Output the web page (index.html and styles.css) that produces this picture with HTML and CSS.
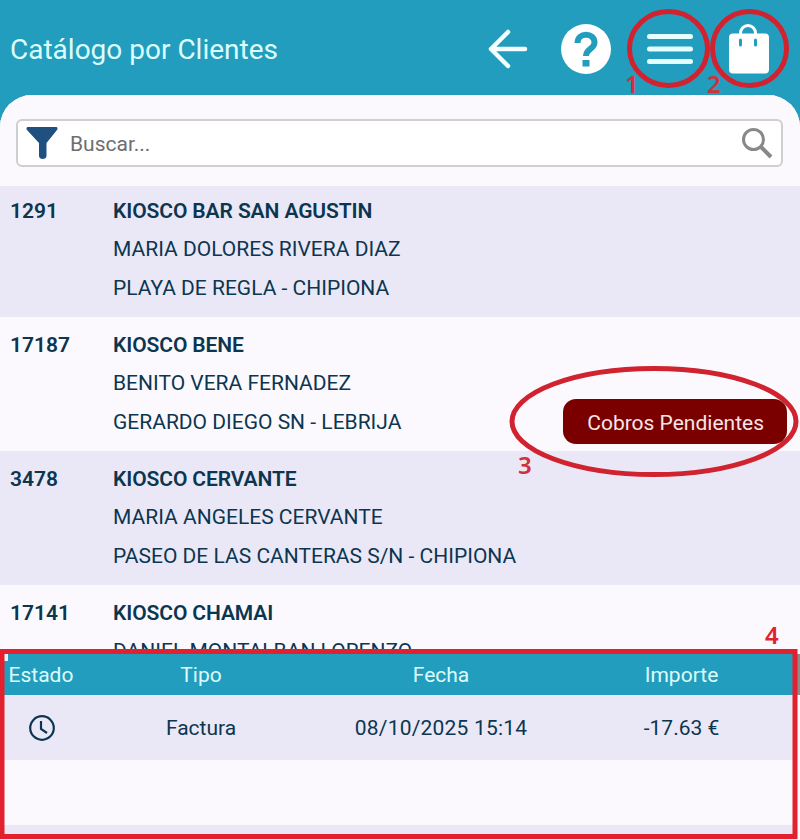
FILE: index.html
```html
<!DOCTYPE html>
<html>
<head>
    <meta charset="utf-8">
    <link rel="stylesheet" href="styles.css">
</head>

<body>

<div class="page">
    <div class="top_bar">
        <div class="title">Catálogo por Clientes</div>
        <div class="top_icons">
            <svg class="icon_back" width="40" height="40" viewBox="0 0 40 40"><path d="M20 3 L3 20 L20 37 M3 20 H37" fill="none" stroke="#f4ffff" stroke-width="4.500" stroke-linecap="round" stroke-linejoin="round"/></svg>
            <svg class="icon_help" width="50" height="50" viewBox="0 0 50 50"><circle cx="25" cy="25" r="25" fill="#fff"/><path d="M16.500 19 C16.500 8 33.500 8 33.500 18.500 C33.500 25 25 25 25 32" fill="none" stroke="#229dbd" stroke-width="6"/><rect x="21.500" y="36" width="7" height="6.500" fill="#229dbd"/></svg>
            <svg class="icon_menu" width="46" height="30" viewBox="0 0 46 30"><path d="M2.500 2.500 H43.500 M2.500 15 H43.500 M2.500 27.500 H43.500" fill="none" stroke="#e4ffff" stroke-width="5" stroke-linecap="round"/></svg>
            <svg class="icon_bag" width="42" height="50" viewBox="0 0 42 50"><path d="M12.500 12 V9 A7.500 7.500 0 0 1 27.500 9 V12" fill="none" stroke="#fff" stroke-width="3"/><rect x="1" y="9.500" width="40" height="40" rx="4" fill="#fff"/><path d="M12.500 16 V21 M27.500 16 V21" stroke="#229dbd" stroke-width="3" stroke-linecap="round"/></svg>
        </div>
    </div>

    <div class="content">
        <div class="search_wrap">
            <div class="search">
                <svg width="32" height="32" viewBox="0 0 32 32"><path d="M2 0 H30 C31.500 0 32 1.500 31 3 L20.500 16 V29 C20.500 33 13 33 13 29 V16 L1 3 C0 1.500 .5 0 2 0 Z" fill="#1f5080"/></svg>
                <span class="search_text">Buscar...</span>
                <svg class="search_lens" width="32" height="32" viewBox="0 0 32 32"><circle cx="12.500" cy="12.500" r="10" fill="none" stroke="#888" stroke-width="3"/><path d="M20 20 L30 30" stroke="#888" stroke-width="4"/></svg>
            </div>
        </div>

        <div class="list">
            <div class="row row_odd">
                <div class="code">1291</div>
                <div>
                    <div class="name">KIOSCO BAR SAN AGUSTIN</div>
                    <div>MARIA DOLORES RIVERA DIAZ</div>
                    <div>PLAYA DE REGLA - CHIPIONA</div>
                </div>
            </div>
            <div class="row">
                <div class="code">17187</div>
                <div>
                    <div class="name">KIOSCO BENE</div>
                    <div>BENITO VERA FERNADEZ</div>
                    <div>GERARDO DIEGO SN - LEBRIJA</div>
                </div>
                <div class="pending_btn">Cobros Pendientes</div>
            </div>
            <div class="row row_odd">
                <div class="code">3478</div>
                <div>
                    <div class="name">KIOSCO CERVANTE</div>
                    <div>MARIA ANGELES CERVANTE</div>
                    <div>PASEO DE LAS CANTERAS S/N - CHIPIONA</div>
                </div>
            </div>
            <div class="row">
                <div class="code">17141</div>
                <div>
                    <div class="name">KIOSCO CHAMAI</div>
                    <div>DANIEL MONTALBAN LORENZO</div>
                </div>
            </div>
        </div>
    </div>

    <div class="panel">
        <div class="panel_dot"></div>
        <div class="panel_row panel_head">
            <div>Estado</div>
            <div>Tipo</div>
            <div>Fecha</div>
            <div class="col_amount">Importe</div>
        </div>
        <div class="panel_row panel_item">
            <div class="col_state"><svg width="28" height="28" viewBox="0 0 28 28"><circle cx="14" cy="14" r="11.800" fill="none" stroke="#0c3650" stroke-width="2.200"/><path d="M13 7 V15 L19 19" fill="none" stroke="#0c3650" stroke-width="2.200"/></svg></div>
            <div>Factura</div>
            <div class="col_date">08/10/2025 15:14</div>
            <div class="col_amount">-17.63 €</div>
        </div>
        <div class="panel_row panel_blank"></div>
        <div class="panel_row panel_item panel_last"></div>
    </div>
    <div class="panel_scroll"></div>

    <!-- marcas rojas de la captura -->
    <svg class="marks" width="800" height="840" viewBox="0 0 800 840">
        <ellipse cx="668.500" cy="48.500" rx="39" ry="37"/>
        <ellipse cx="749.500" cy="48.500" rx="37" ry="37"/>
        <ellipse cx="654" cy="421.500" rx="142" ry="53"/>
        <rect class="mark_box" x="2" y="651.500" width="793" height="185"/>
    </svg>
    <span class="mark_num num_1">1</span>
    <span class="mark_num num_2">2</span>
    <span class="mark_num num_3">3</span>
    <span class="mark_num num_4">4</span>
</div>

</body>
</html>
```

FILE: styles.css
```css
* {
    box-sizing: border-box;
}
html, body {
    margin: 0;
    padding: 0;
}
body {
    font-family: Roboto, "Liberation Sans", sans-serif;
    color: #0c3650;
}
.page {
    position: relative;
    width: 800px;
    height: 840px;
    overflow: hidden;
    background: #229dbd;
}

.top_bar {
    display: flex;
    align-items: center;
    justify-content: space-between;
    height: 95px;
    padding: 0 30px 0 10px;
}
.title {
    font-size: 28px;
    color: #dcfdfd;
    margin-top: 3px;
}
.top_icons {
    display: flex;
    align-items: center;
    margin-top: 3px;
}
.icon_help {
    margin-left: 33px;
}
.icon_menu {
    margin-left: 36px;
}
.icon_bag {
    margin-left: 35px;
}

.content {
    height: 745px;
    background: #fbf9fe;
    border-radius: 32px 32px 0 0;
    overflow: hidden;
}
.search_wrap {
    height: 91px;
    padding: 24px 17px 0 16px;
    position: relative;
    z-index: 1;
    background: #fbf9fe;
}
.search {
    display: flex;
    align-items: center;
    height: 48px;
    padding: 0 8px;
    background: #fff;
    border: 2px solid #cfcfcf;
    border-radius: 6px;
}
.search_text {
    flex: 1;
    margin: 2px 0 0 12px;
    font-size: 21px;
    color: #6e6e6e;
}

.list {
    margin-top: -3px;
}
.row {
    display: grid;
    grid-template-columns: 103px 1fr auto;
    height: 134px;
    padding: 9px 13px 7px 10px;
    font-size: 21px;
    line-height: 38.400px;
}
.row_odd {
    background: #eae8f6;
}
.code, .name {
    font-weight: 600;
}
.name {
    letter-spacing: -.1px;
}
.pending_btn {
    align-self: end;
    height: 45px;
    padding: 0 23px 0 24px;
    background: #7a0000;
    border-radius: 13px;
    color: #f6e6e6;
    line-height: 49px;
}

.panel {
    position: absolute;
    left: 0;
    top: 654px;
    width: 797px;
    height: 186px;
    background: #fbf9fe;
    font-size: 21px;
}
.panel_dot {
    position: absolute;
    left: 4px;
    top: 0;
    width: 4px;
    height: 7px;
    background: #e4f4fa;
}
.panel_row {
    display: grid;
    grid-template-columns: 82px 238px 242px 1fr;
    text-align: center;
    align-items: center;
}
.panel_head {
    height: 41px;
    background: #229dbd;
    color: #dcfdfd;
}
.panel_item {
    height: 65px;
    background: #eae8f6;
}
.panel_blank {
    height: 65px;
}
.panel_last {
    height: 15px;
}
.col_amount {
    padding-left: 4px;
}
.col_state {
    height: 28px;
    padding-left: 1px;
}
.col_date {
    letter-spacing: .2px;
}
.panel_scroll {
    position: absolute;
    left: 797px;
    top: 654px;
    width: 3px;
    height: 41px;
    background: #8b8b8b;
}

.marks {
    position: absolute;
    left: 0;
    top: 0;
}
.marks ellipse {
    fill: none;
    stroke: #d0222f;
    stroke-width: 5px;
}
.mark_box {
    fill: none;
    stroke: #e3202e;
    stroke-width: 5px;
}
.mark_num {
    position: absolute;
    font-family: "Noto Sans", sans-serif;
    font-size: 24px;
    font-weight: 600;
    line-height: 24px;
    color: #d0323c;
}
.num_1 {
    left: 625px;
    top: 72px;
}
.num_2 {
    left: 707px;
    top: 72px;
}
.num_3 {
    left: 518px;
    top: 453px;
}
.num_4 {
    left: 765px;
    top: 623px;
    color: #e3202e;
}
```
